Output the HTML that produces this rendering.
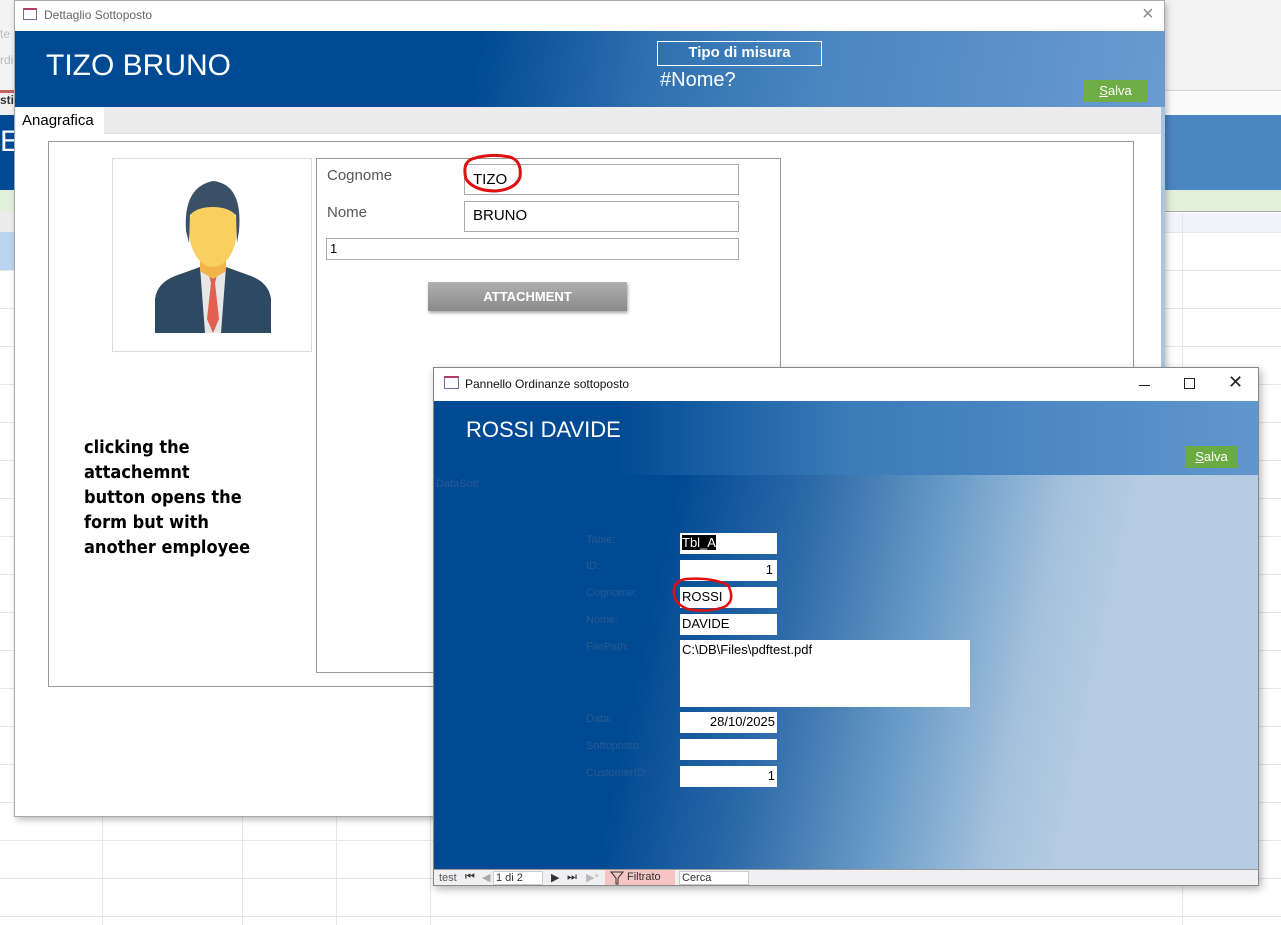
<!DOCTYPE html>
<html><head><meta charset="utf-8">
<style>
*{box-sizing:border-box;margin:0;padding:0}
body{width:1281px;height:925px;position:relative;overflow:hidden;background:#fff;font-family:"Liberation Sans",sans-serif;
background-image:linear-gradient(#e6e6e6 1px,transparent 1px);background-size:100% 38px;background-position:0 4px}
.abs{position:absolute}
.vl{position:absolute;width:1px;background:#e6e6e6;top:816px;height:109px}
</style></head><body>
<div class="abs" style="left:0;top:0;width:14px;height:92px;background:#f3f3f3;font-size:12px;color:#bbb"><div style="position:absolute;top:27px">te</div><div style="position:absolute;top:53px">rdi</div></div>
<div class="abs" style="left:0;top:90px;width:14px;height:3px;background:#c86060"></div>
<div class="abs" style="left:0;top:93px;width:14px;height:22px;background:#f0f0f0;font-size:12px;font-weight:bold;color:#333">sti</div>
<div class="abs" style="left:0;top:115px;width:14px;height:75px;background:#004a94;color:#fff;font-size:30px;padding-top:10px">E</div>
<div class="abs" style="left:0;top:190px;width:14px;height:22px;background:#e2efda"></div>
<div class="abs" style="left:0;top:212px;width:14px;height:20px;background:#ececec"></div>
<div class="abs" style="left:0;top:232px;width:14px;height:38px;background:#b8d4ee"></div>
<div class="abs" style="left:1165px;top:0;width:116px;height:91px;background:#f3f3f3;border-bottom:1px solid #d0d0d0"></div>
<div class="abs" style="left:1165px;top:92px;width:116px;height:23px;background:#fafafa"></div>
<div class="abs" style="left:1165px;top:115px;width:116px;height:75px;background:#4a86c0"></div>
<div class="abs" style="left:1165px;top:190px;width:116px;height:22px;background:#e2efda;border-bottom:1px solid #aaa"></div>
<div class="abs" style="left:1165px;top:213px;width:116px;height:19px;background:#f3f4fb"></div>
<div class="abs" style="left:1182px;top:213px;width:1px;height:712px;background:#e6e6e6"></div>
<div class="vl" style="left:102px"></div><div class="vl" style="left:242px"></div><div class="vl" style="left:336px"></div><div class="vl" style="left:430px"></div>

<div class="abs" style="left:14px;top:0;width:1151px;height:817px;background:#fff;border:1px solid #aaa;box-shadow:2px 3px 6px rgba(0,0,0,.25)">
  <div class="abs" style="left:8px;top:7px;width:14px;height:12px;border:1px solid #7a6a9a;border-top:2px solid #b04060"></div>
  <div class="abs" style="left:29px;top:7px;font-size:12px;color:#666">Dettaglio Sottoposto</div>
  <div class="abs" style="left:1127px;top:2px;font-size:20px;color:#888;font-weight:200">×</div>
  <div class="abs" style="left:0;top:30px;width:1150px;height:76px;background:linear-gradient(100deg,#004a94 0%,#004a94 40%,#2f70b0 55%,#4a86c0 70%,#6a9bd0 100%)">
    <div class="abs" style="left:31px;top:18px;font-size:30px;color:#fff">TIZO BRUNO</div>
    <div class="abs" style="left:642px;top:10px;width:165px;height:25px;border:1.5px solid #fff;color:#fff;font-weight:bold;font-size:15px;text-align:center;line-height:22px">Tipo di misura</div>
    <div class="abs" style="left:645px;top:38px;font-size:20px;color:#fff">#Nome?</div>
    <div class="abs" style="left:1068px;top:49px;width:65px;height:22px;background:#70ad47;color:#fff;font-size:13px;text-align:center;line-height:22px"><u>S</u>alva</div>
  </div>
  <div class="abs" style="left:0;top:106px;width:1146px;height:27px;background:#ececec;border-bottom:1px solid #ddd"></div>
  <div class="abs" style="left:1146px;top:106px;width:4px;height:710px;background:#a8c4e0"></div>
  <div class="abs" style="left:1px;top:106px;width:88px;height:28px;background:#fff;font-size:15px;padding:5px 0 0 6px">Anagrafica</div>
  <div class="abs" style="left:33px;top:140px;width:1086px;height:546px;border:1px solid #999"></div>
  <div class="abs" style="left:97px;top:157px;width:200px;height:194px;border:1px solid #ddd">
    <svg width="200" height="194" viewBox="0 0 200 194">
      <path d="M42 174 L42 140 Q44 124 62 117 L87 108 L113 108 L138 117 Q156 124 158 140 L158 174 Z" fill="#2e4a62"/>
      <path d="M87 108 L100 115 L113 108 L108 174 L92 174 Z" fill="#e6e6e6"/>
      <path d="M96 116 L104 116 L102 124 L106 160 L100 174 L94 160 L98 124 Z" fill="#e1604f"/>
      <path d="M87 102 L113 102 L113 112 L100 120 L87 112 Z" fill="#f0b44a"/>
      <ellipse cx="100" cy="70" rx="24" ry="38" fill="#f9cf60"/>
      <path d="M73 72 Q70 28 100 22 Q130 25 126 72 L124 84 L123 56 Q115 48 100 48 Q84 48 77 56 L76 84 Z" fill="#3a5066"/>
    </svg>
  </div>
  <div class="abs" style="left:301px;top:157px;width:465px;height:515px;border:1px solid #999"></div>
  <div class="abs" style="left:312px;top:166px;font-size:15px;color:#555">Cognome</div>
  <div class="abs" style="left:312px;top:203px;font-size:15px;color:#555">Nome</div>
  <div class="abs" style="left:449px;top:163px;width:275px;height:31px;border:1px solid #aaa;font-size:15px;padding:6px 8px">TIZO</div>
  <div class="abs" style="left:449px;top:200px;width:275px;height:31px;border:1px solid #aaa;font-size:15px;padding:5px 8px">BRUNO</div>
  <div class="abs" style="left:311px;top:237px;width:413px;height:22px;border:1px solid #aaa;font-size:13px;padding:2px 3px">1</div>
  <svg class="abs" style="left:445px;top:152px" width="66" height="42"><path d="M6 26 Q2 10 12 6 Q30 0 50 4 Q62 8 60 24 Q56 36 36 38 Q14 38 6 26 Z" fill="none" stroke="#e01010" stroke-width="3"/></svg>
  <div class="abs" style="left:413px;top:281px;width:199px;height:29px;background:linear-gradient(#b0b0b0,#8a8a8a);box-shadow:1px 2px 3px rgba(0,0,0,.35);color:#fff;font-weight:bold;font-size:13px;text-align:center;line-height:29px">ATTACHMENT</div>
  <div class="abs" style="left:69px;top:434px;font-family:'DejaVu Sans Condensed','DejaVu Sans',sans-serif;font-stretch:condensed;font-weight:bold;font-size:18px;line-height:25px;color:#000">clicking the<br>attachemnt<br>button opens the<br>form but with<br>another employee</div>
</div>

<div class="abs" style="left:433px;top:367px;width:826px;height:519px;background:#fff;border:1px solid #888;box-shadow:2px 3px 8px rgba(0,0,0,.3)">
  <div class="abs" style="left:10px;top:8px;width:15px;height:13px;border:1px solid #7a6a9a;border-top:2px solid #b04060"></div>
  <div class="abs" style="left:31px;top:9px;font-size:12px;color:#111">Pannello Ordinanze sottoposto</div>
  <div class="abs" style="left:705px;top:17px;width:11px;height:1px;background:#222"></div>
  <div class="abs" style="left:750px;top:10px;width:11px;height:11px;border:1px solid #222"></div>
  <div class="abs" style="left:794px;top:4px;font-size:18px;color:#222">✕</div>
  <div class="abs" style="left:0;top:33px;width:824px;height:74px;background:linear-gradient(90deg,#004a94 0%,#004a94 22%,#3a7bb8 50%,#6196cd 100%)">
    <div class="abs" style="left:32px;top:16px;font-size:22px;color:#fff">ROSSI DAVIDE</div>
    <div class="abs" style="left:751px;top:45px;width:53px;height:22px;background:#6bab44;color:#fff;font-size:13px;text-align:center;line-height:22px"><u>S</u>alva</div>
  </div>
  <div class="abs" style="left:0;top:107px;width:824px;height:394px;background:linear-gradient(102deg,#004a94 0%,#004a94 27%,#2d6aa8 42%,#6c9ec9 58%,#a4c1dc 70%,#b5cce2 78%,#b5cce2 100%)">
    <div class="abs" style="left:2px;top:3px;font-size:11px;color:#2a5a90">DataSott</div>
    <div style="font-size:11px;color:#2a5a90">
      <div class="abs" style="left:152px;top:59px">Table:</div>
      <div class="abs" style="left:152px;top:85px">ID:</div>
      <div class="abs" style="left:152px;top:112px">Cognome:</div>
      <div class="abs" style="left:152px;top:139px">Nome:</div>
      <div class="abs" style="left:152px;top:166px">FilePath:</div>
      <div class="abs" style="left:152px;top:238px">Data:</div>
      <div class="abs" style="left:152px;top:265px">Sottoposto:</div>
      <div class="abs" style="left:152px;top:292px">CustomerID:</div>
    </div>
    <div style="font-size:13px">
      <div class="abs" style="left:246px;top:58px;width:97px;height:21px;background:#fff;padding:2px 2px"><span style="background:#000;color:#fff">Tbl_A</span></div>
      <div class="abs" style="left:246px;top:85px;width:97px;height:21px;background:#fff;padding:2px 4px;text-align:right">1</div>
      <div class="abs" style="left:246px;top:112px;width:97px;height:21px;background:#fff;padding:2px 2px">ROSSI</div>
      <div class="abs" style="left:246px;top:139px;width:97px;height:21px;background:#fff;padding:2px 2px">DAVIDE</div>
      <div class="abs" style="left:246px;top:165px;width:290px;height:67px;background:#fff;padding:2px 2px">C:\DB\Files\pdftest.pdf</div>
      <div class="abs" style="left:246px;top:237px;width:97px;height:21px;background:#fff;padding:2px 2px;text-align:right">28/10/2025</div>
      <div class="abs" style="left:246px;top:264px;width:97px;height:21px;background:#fff"></div>
      <div class="abs" style="left:246px;top:291px;width:97px;height:21px;background:#fff;padding:2px 2px;text-align:right">1</div>
    </div>
    <svg class="abs" style="left:232px;top:100px" width="80" height="40"><path d="M8 20 Q6 6 20 4 Q45 2 62 10 Q70 26 58 32 Q40 38 22 34 Q10 30 8 20 Z" fill="none" stroke="#e01010" stroke-width="2.5"/></svg>
  </div>
  <div class="abs" style="left:0;top:501px;width:824px;height:16px;background:#f0f0f2;border-top:1px solid #999;font-size:11px;color:#333">
    <span class="abs" style="left:5px;top:2px;color:#555">test</span>
    <span class="abs" style="left:31px;top:1px">⏮</span>
    <span class="abs" style="left:48px;top:1px;color:#aaa">◀</span>
    <span class="abs" style="left:59px;top:1px;width:50px;height:14px;background:#fff;border:1px solid #ccc;padding-left:2px">1 di 2</span>
    <span class="abs" style="left:117px;top:1px">▶</span>
    <span class="abs" style="left:133px;top:1px">⏭</span>
    <span class="abs" style="left:152px;top:1px;color:#bbb">▶*</span>
    <span class="abs" style="left:171px;top:0;width:70px;height:15px;background:#f7c4c4;padding-left:22px;padding-top:1px">Filtrato</span>
    <svg class="abs" style="left:176px;top:1px" width="14" height="14"><path d="M1 1 L13 1 L8 7 L8 13 L6 13 L6 7 Z" fill="none" stroke="#333" stroke-width="1"/></svg>
    <span class="abs" style="left:245px;top:1px;width:70px;height:14px;background:#fff;border:1px solid #ccc;padding-left:2px">Cerca</span>
  </div>
</div>
</body></html>
